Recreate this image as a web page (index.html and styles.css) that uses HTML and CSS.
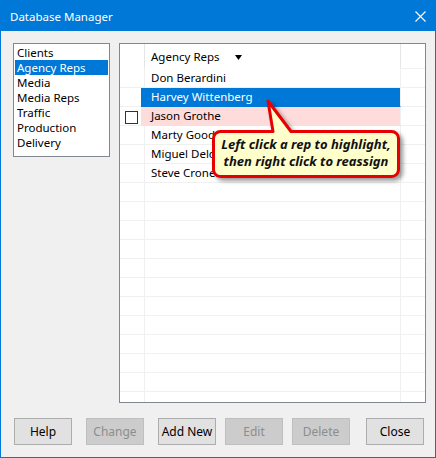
FILE: index.html
```html
<!DOCTYPE html>
<html lang="en">
<head>
  <meta charset="UTF-8" />
  <title>Database Manager</title>
  <link rel="stylesheet" href="styles.css">
</head>
<body>
  <div class="window">
    <div class="titlebar">
      <span class="title">Database Manager</span>
      <svg class="close" width="11" height="11" viewBox="0 0 11 11">
        <path d="M0.5 0.5L10.5 10.5M10.5 0.5L0.5 10.5" stroke="#fff" stroke-width="1.1" fill="none"/>
      </svg>
    </div>

    <div class="client">
      <div class="main">
        <ul class="listbox">
          <li>Clients</li>
          <li class="sel">Agency Reps</li>
          <li>Media</li>
          <li>Media Reps</li>
          <li>Traffic</li>
          <li>Production</li>
          <li>Delivery</li>
        </ul>

        <div class="grid">
          <div class="grid-row grid-head">
            <div class="rh"></div>
            <div class="cell"><span class="head-label">Agency Reps</span><svg class="sort" width="7" height="5" viewBox="0 0 7 5"><path d="M0 0H7L3.5 5Z" fill="#000"/></svg></div>
            <div class="filler"></div>
          </div>
          <div class="grid-row"><div class="rh"></div><div class="cell">Don Berardini</div><div class="filler"></div></div>
          <div class="grid-row selected"><div class="rh"></div><div class="cell">Harvey Wittenberg</div><div class="filler"></div></div>
          <div class="grid-row flagged"><div class="rh"><span class="check"></span></div><div class="cell">Jason Grothe</div><div class="filler"></div></div>
          <div class="grid-row"><div class="rh"></div><div class="cell">Marty Goodman</div><div class="filler"></div></div>
          <div class="grid-row"><div class="rh"></div><div class="cell">Miguel Delorme</div><div class="filler"></div></div>
          <div class="grid-row"><div class="rh"></div><div class="cell">Steve Cronen</div><div class="filler"></div></div>
          <div class="grid-row"><div class="rh"></div><div class="cell"></div><div class="filler"></div></div>
          <div class="grid-row"><div class="rh"></div><div class="cell"></div><div class="filler"></div></div>
          <div class="grid-row"><div class="rh"></div><div class="cell"></div><div class="filler"></div></div>
          <div class="grid-row"><div class="rh"></div><div class="cell"></div><div class="filler"></div></div>
          <div class="grid-row"><div class="rh"></div><div class="cell"></div><div class="filler"></div></div>
          <div class="grid-row"><div class="rh"></div><div class="cell"></div><div class="filler"></div></div>
          <div class="grid-row"><div class="rh"></div><div class="cell"></div><div class="filler"></div></div>
          <div class="grid-row"><div class="rh"></div><div class="cell"></div><div class="filler"></div></div>
          <div class="grid-row"><div class="rh"></div><div class="cell"></div><div class="filler"></div></div>
          <div class="grid-row"><div class="rh"></div><div class="cell"></div><div class="filler"></div></div>
          <div class="grid-row"><div class="rh"></div><div class="cell"></div><div class="filler"></div></div>
          <div class="grid-row"><div class="rh"></div><div class="cell"></div><div class="filler"></div></div>

          <!-- hint balloon -->
          <svg class="balloon" width="196" height="85" viewBox="0 0 196 85">
            <path d="M11.5 33.5H64L59 3L82 33.5H182.5A7 7 0 0 1 189.5 40.5V71.5A7 7 0 0 1 182.5 78.5H11.5A7 7 0 0 1 4.5 71.5V40.5A7 7 0 0 1 11.5 33.5Z"
                  fill="#ffffcc" stroke="#e60000" stroke-width="3" stroke-linejoin="round"/>
          </svg>
          <div class="balloon-text">Left click a rep to highlight,<br>then right click to reassign</div>
        </div>
      </div>

      <div class="buttons">
        <button class="gap-wide">Help</button>
        <button class="gap-wide" disabled>Change</button>
        <button class="gap-narrow">Add New</button>
        <button class="gap-narrow" disabled>Edit</button>
        <button class="gap-last" disabled>Delete</button>
        <button>Close</button>
      </div>
    </div>
  </div>
</body>
</html>
```

FILE: styles.css
```css
body {
  margin: 0;
  font-family: "Noto Sans", "Open Sans", sans-serif;
  font-size: 11.5px;
  color: #000;
}

.window {
  width: 436px;
  height: 458px;
  box-sizing: border-box;
  border: 1px solid #0078d7;
  background: #f0f0f0;
  display: flex;
  flex-direction: column;
}

.titlebar {
  height: 30px;
  background: #0078d7;
  color: #fff;
  display: flex;
  align-items: center;
  padding-left: 9px;
}

.close {
  margin-left: auto;
  margin-right: 9px;
}

.client {
  padding: 12px 9px 0 12px;
}

.main {
  display: flex;
  gap: 9px;
  height: 360px;
}

.listbox {
  width: 97px;
  height: 114px;
  box-sizing: border-box;
  margin: 0;
  padding: 1px;
  list-style: none;
  background: #fff;
  border: 1px solid #828790;
}

.listbox li {
  height: 15px;
  line-height: 15px;
  padding-left: 2px;
  white-space: nowrap;
}

.listbox .sel {
  background: #0078d7;
  color: #fff;
}

.grid {
  position: relative;
  width: 307px;
  height: 360px;
  box-sizing: border-box;
  border: 1px solid #828790;
  background: #fff;
  overflow: hidden;
}

.grid-row {
  display: flex;
  height: 19px;
}

.grid-row > div {
  box-sizing: border-box;
  border-bottom: 1px solid #f0f0f0;
  line-height: 18px;
}

.rh {
  width: 25px;
  border-right: 1px solid #f0f0f0;
}

.cell {
  width: 256px;
  padding-left: 6px;
  border-right: 1px solid #f0f0f0;
  white-space: nowrap;
  overflow: hidden;
}

.filler {
  flex: 1;
}

.grid-head {
  height: 25px;
}

.grid-head > div {
  line-height: 25px;
}

.grid-head .rh,
.grid-head .cell {
  border-bottom-color: #fff;
  border-right-color: #e5e5e5;
}

.head-label {
  display: inline-block;
  width: 84px;
}

.sort {
  vertical-align: 1px;
}

.selected .cell {
  background: #0078d7;
  color: #fff;
  border-bottom-color: #0078d7;
  box-shadow: -4px 0 0 #0078d7;
}

.flagged .cell {
  background: #ffdcdc;
  border-bottom-color: #ffdcdc;
  box-shadow: -4px 0 0 #ffdcdc;
}

.check {
  display: block;
  width: 13px;
  height: 13px;
  box-sizing: border-box;
  margin: 4px 0 0 5px;
  border: 1px solid #333;
  background: #fff;
}

.balloon {
  position: absolute;
  left: 89px;
  top: 54px;
  overflow: visible;
  filter: drop-shadow(3px 3px 2px rgba(0, 0, 0, 0.4));
}

.balloon-text {
  position: absolute;
  left: 92px;
  top: 86px;
  width: 188px;
  height: 45px;
  display: flex;
  align-items: center;
  justify-content: center;
  text-align: center;
  font-size: 13px;
  font-weight: bold;
  font-style: italic;
  line-height: 17px;
  color: #111;
}

.buttons {
  display: flex;
  margin-top: 15px;
  padding-left: 1px;
}

button {
  width: 58px;
  height: 27px;
  padding: 0;
  font: inherit;
  font-size: 12px;
  color: #000;
  background: #e1e1e1;
  border: 1px solid #adadad;
}

button:disabled {
  background: #cccccc;
  border-color: #bfbfbf;
  color: #8d8d8d;
}

.gap-wide {
  margin-right: 14px;
}

.gap-narrow {
  margin-right: 9px;
}

.gap-last {
  margin-right: 16px;
}
```
